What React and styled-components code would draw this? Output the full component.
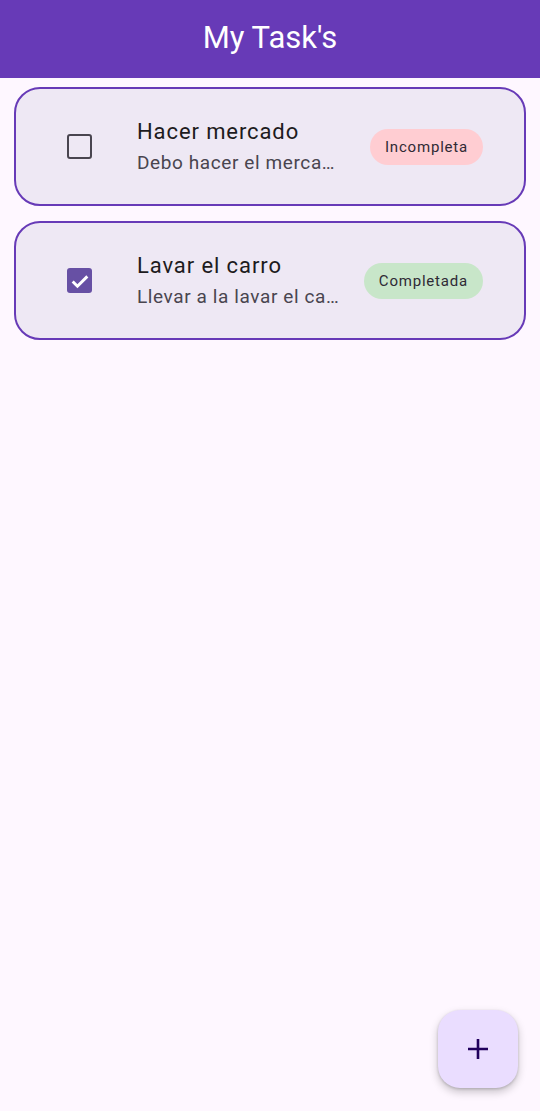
import React, { useState } from 'react'
import styled, { createGlobalStyle } from 'styled-components'

const GlobalStyle = createGlobalStyle`
        html, body {
                margin: 0;
                padding: 0;
                background: #fef7ff;
                font-family: Roboto, "Noto Sans", sans-serif;
        }
        #root {
                min-height: 100vh;
        }
`;

const Page = styled.div`
        min-height: 100vh;
        background: #fef7ff;
        display: flex;
        flex-direction: column;
`;

const AppBar = styled.header`
        height: 78px;
        background: #673ab7;
        display: flex;
        align-items: center;
        justify-content: center;

        h1 {
                margin: 0 0 3px;
                color: #fff;
                font-size: 31px;
                font-weight: 400;
                letter-spacing: 0;
        }
`;

const TaskList = styled.div`
        display: flex;
        flex-direction: column;
        gap: 15px;
        padding: 9px 14px;
`;

const Card = styled.div`
        box-sizing: border-box;
        height: 119px;
        display: flex;
        align-items: center;
        border: 2.5px solid #673ab7;
        border-radius: 26px;
        background: #eee8f4;
        padding: 0 41px 0 51px;
`;

const Check = styled.button`
        width: 25px;
        height: 25px;
        flex: none;
        box-sizing: border-box;
        padding: 0;
        border-radius: 3px;
        border: ${(p) => (p.checked ? 'none' : '2.5px solid #49454f')};
        background: ${(p) => (p.checked ? '#6750a4' : 'transparent')};
        display: flex;
        align-items: center;
        justify-content: center;
        cursor: pointer;
`;

const TextCol = styled.div`
        flex: 1;
        min-width: 0;
        margin: 0 22px 0 45px;
        display: flex;
        flex-direction: column;
        gap: 4px;
`;

const Title = styled.div`
        font-size: 22px;
        line-height: 28px;
        color: #1d1b20;
        letter-spacing: 0.9px;
        white-space: nowrap;
        overflow: hidden;
        text-overflow: ellipsis;
`;

const Subtitle = styled.div`
        font-size: 19px;
        line-height: 25px;
        color: #49454f;
        letter-spacing: 0.6px;
        white-space: nowrap;
        overflow: hidden;
        text-overflow: ellipsis;
        max-width: 208px;
`;

const Chip = styled.span`
        flex: none;
        height: 36px;
        padding: 0 15px;
        border-radius: 18px;
        display: flex;
        align-items: center;
        font-size: 15px;
        font-weight: 400;
        letter-spacing: 0.8px;
        color: #2f2a35;
        background: ${(p) => (p.done ? '#c8e6c9' : '#ffcdd2')};
`;

const Fab = styled.button`
        position: fixed;
        right: 22px;
        bottom: 23px;
        width: 80px;
        height: 78px;
        border: none;
        border-radius: 22px;
        background: #eaddff;
        box-shadow: 0 4px 8px rgba(0, 0, 0, 0.22), 0 1px 3px rgba(0, 0, 0, 0.18);
        display: flex;
        align-items: center;
        justify-content: center;
        cursor: pointer;
`;

const initialTasks = [
        { id: 1, title: 'Hacer mercado', description: 'Debo hacer el mercado de la semana', done: false },
        { id: 2, title: 'Lavar el carro', description: 'Llevar a la lavar el carro el sabado', done: true },
];

export default function App() {
        const [tasks, setTasks] = useState(initialTasks)

        const toggle = (id) => {
                setTasks(tasks.map((t) => (t.id === id ? { ...t, done: !t.done } : t)))
        }

        return (
                <Page>
                        <GlobalStyle />
                        <AppBar>
                                <h1>My Task's</h1>
                        </AppBar>
                        <TaskList>
                                {tasks.map((task) => (
                                        <Card key={task.id}>
                                                <Check checked={task.done} onClick={() => toggle(task.id)}>
                                                        {task.done && (
                                                                <svg width="22" height="22" viewBox="0 0 24 24">
                                                                        <path d="M4 12.5l5.2 5.2L20 7" fill="none" stroke="#fff" strokeWidth="3.2" />
                                                                </svg>
                                                        )}
                                                </Check>
                                                <TextCol>
                                                        <Title>{task.title}</Title>
                                                        <Subtitle>{task.description}</Subtitle>
                                                </TextCol>
                                                <Chip done={task.done}>{task.done ? 'Completada' : 'Incompleta'}</Chip>
                                        </Card>
                                ))}
                        </TaskList>
                        <Fab>
                                <svg width="24" height="24" viewBox="0 0 24 24">
                                        <path d="M12 2v20M2 12h20" stroke="#21005d" strokeWidth="2.6" />
                                </svg>
                        </Fab>
                </Page>
        )
}
